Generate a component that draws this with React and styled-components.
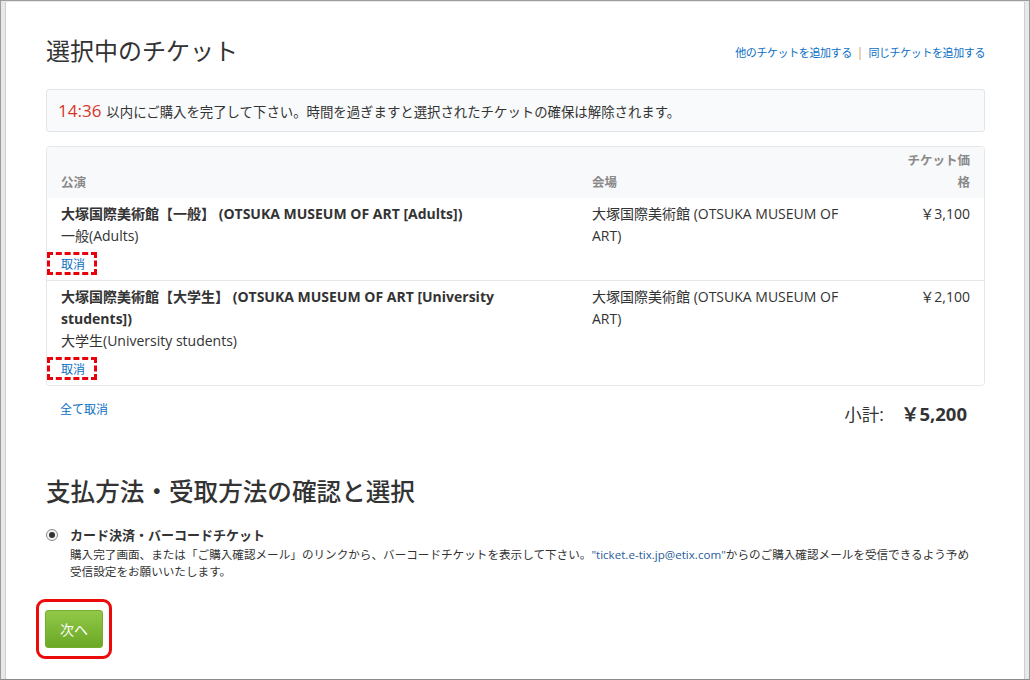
import React from 'react';
import styled, { createGlobalStyle } from 'styled-components';

const GlobalStyle = createGlobalStyle`
  body {
    margin: 0;
    font-family: "Open Sans", "Noto Sans CJK JP", sans-serif;
    color: #333;
  }
`;

const Frame = styled.div`
  width: 1030px;
  height: 680px;
  box-sizing: border-box;
  border: 1px solid #9c9c9c;
  border-bottom-color: #8a8a8a;
  background: #e8e8e8;
  padding: 1px 4px 0 4px;
  display: flex;
`;

const Panel = styled.div`
  flex: 1;
  background: #fff;
  border-left: 1px solid #cfcfcf;
  border-right: 1px solid #cfcfcf;
  padding: 34px 39px 0 40px;
  display: flex;
  flex-direction: column;
`;

const HeadRow = styled.div`
  display: flex;
  align-items: center;
  justify-content: space-between;
`;

const PageTitle = styled.h1`
  margin: 0;
  font-size: ${(p) => (p.$strong ? '24.6px' : '24px')};
  line-height: 30px;
  font-weight: ${(p) => (p.$strong ? 500 : 400)};
  color: #333;
  margin-top: ${(p) => p.$top || 0}px;
`;

const TopLinks = styled.div`
  line-height: 16px;
  margin-top: 2px;
`;

const Link = styled.a`
  color: #0b6fc4;
  text-decoration: none;
  cursor: pointer;
  font-size: ${(p) => (p.$small ? '11px' : '12px')};
  letter-spacing: ${(p) => (p.$small ? '-0.4px' : '0')};
`;

const Sep = styled.span`
  color: #e0955a;
  font-size: 12px;
  margin: 0 5px;
`;

const Alert = styled.div`
  margin-top: 23px;
  height: 43px;
  box-sizing: border-box;
  border: 1px solid #e1e4e8;
  border-radius: 3px;
  background: #f9fafb;
  padding: 0 11px;
  display: flex;
  align-items: center;
  font-size: 13.4px;
`;

const Timer = styled.span`
  color: #d8352a;
  font-size: 17px;
  margin-right: 5px;
`;

const Table = styled.div`
  margin-top: 14px;
  border: 1px solid #e4e6e8;
  border-radius: 4px;
  overflow: hidden;
`;

const Row = styled.div`
  display: grid;
  grid-template-columns: 531px 290px 1fr;
  align-items: ${(p) => (p.$head ? 'end' : 'start')};
  background: ${(p) => (p.$head ? '#f8f9fa' : '#fff')};
  border-top: ${(p) => (p.$head ? 'none' : '1px solid #e6e7e9')};
  &:nth-child(2) {
    border-top: none;
  }
`;

const Cell = styled.div`
  padding: ${(p) => (p.$head ? '3px 14px 4px' : '5px 14px 7px')};
  padding-right: ${(p) => (p.$wide ? 47 : 14)}px;
  text-align: ${(p) => (p.$right ? 'right' : 'left')};
  font-size: ${(p) => (p.$head ? '12.5px' : '14px')};
  font-weight: ${(p) => (p.$head ? 700 : 400)};
  color: ${(p) => (p.$head ? '#8a8a8a' : '#333')};
  line-height: 22px;
`;

const PriceLabel = styled.span`
  display: inline-block;
  max-width: 64px;
`;

const ShowName = styled.div`
  font-weight: 700;
`;

const CancelWrap = styled.div`
  margin-top: 9px;
  line-height: 16px;
`;

const Marked = styled.span`
  position: relative;
  display: inline-block;
  &::after {
    content: '';
    position: absolute;
    left: -14px;
    top: -4px;
    width: 50px;
    height: 23px;
    box-sizing: border-box;
    border: 3px dashed #e8000b;
    pointer-events: none;
  }
`;

const Summary = styled.div`
  display: flex;
  justify-content: space-between;
  align-items: flex-start;
  margin-top: 15px;
  padding: 0 18px 0 14px;
`;

const CancelAll = styled(Link)`
  margin-top: 1px;
  line-height: 16px;
`;

const Subtotal = styled.div`
  display: flex;
  align-items: baseline;
  gap: 17px;
  line-height: 26px;
`;

const SubLabel = styled.span`
  font-size: 17.5px;
  color: #333;
`;

const SubValue = styled.span`
  font-size: 18.5px;
  font-weight: 700;
  color: #333;
`;

const Method = styled.div`
  margin-top: 19px;
  display: flex;
  align-items: flex-start;
`;

const Radio = styled.span`
  width: 12px;
  height: 12px;
  box-sizing: border-box;
  border-radius: 50%;
  border: 1px solid #8a8a8a;
  background: #f4f4f4;
  margin-top: 3px;
  display: flex;
  align-items: center;
  justify-content: center;
  &::after {
    content: '';
    width: 6px;
    height: 6px;
    border-radius: 50%;
    background: #333;
  }
`;

const MethodBody = styled.div`
  margin-left: 12px;
`;

const MethodName = styled.div`
  font-size: 13px;
  font-weight: 700;
  line-height: 18px;
  font-family: "Noto Sans CJK JP", sans-serif;
`;

const MethodDesc = styled.div`
  margin-top: 2px;
  font-size: 11.6px;
  line-height: 16px;
  font-family: "Noto Sans CJK JP", sans-serif;
  & > span {
    display: block;
    white-space: nowrap;
  }
`;

const Mail = styled.span`
  font-family: "Open Sans", sans-serif;
  color: #2a5d9a;
`;

const ButtonWrap = styled.div`
  margin-top: 31px;
  margin-left: -1px;
  align-self: flex-start;
  position: relative;
  &::after {
    content: '';
    position: absolute;
    left: -9px;
    top: -11px;
    right: -9px;
    bottom: -11px;
    border: 3px solid #ec0a0a;
    border-radius: 9px;
    pointer-events: none;
  }
`;

const NextButton = styled.button`
  width: 58px;
  height: 38px;
  border: 1px solid #74ad2c;
  border-radius: 3px;
  background: linear-gradient(#92c848, #6aa826);
  color: #fff;
  font-size: 14px;
  font-family: "Noto Sans CJK JP", sans-serif;
  cursor: pointer;
  padding: 0;
`;

const tickets = [
  {
    name: '大塚国際美術館【一般】 (OTSUKA MUSEUM OF ART [Adults])',
    type: '一般(Adults)',
    price: '￥3,100',
  },
  {
    name: '大塚国際美術館【大学生】 (OTSUKA MUSEUM OF ART [University students])',
    type: '大学生(University students)',
    price: '￥2,100',
  },
];

export default function App() {
  return (
    <>
      <GlobalStyle />
      <Frame>
        <Panel>
          <HeadRow>
            <PageTitle>選択中のチケット</PageTitle>
            <TopLinks>
              <Link $small>他のチケットを追加する</Link>
              <Sep>|</Sep>
              <Link $small>同じチケットを追加する</Link>
            </TopLinks>
          </HeadRow>

          <Alert>
            <Timer>14:36</Timer>
            以内にご購入を完了して下さい。時間を過ぎますと選択されたチケットの確保は解除されます。
          </Alert>

          <Table>
            <Row $head>
              <Cell $head>公演</Cell>
              <Cell $head>会場</Cell>
              <Cell $head $right>
                <PriceLabel>チケット価格</PriceLabel>
              </Cell>
            </Row>
            {tickets.map((t) => (
              <Row key={t.name}>
                <Cell $wide>
                  <ShowName>{t.name}</ShowName>
                  <div>{t.type}</div>
                  <CancelWrap>
                    <Marked>
                      <Link>取消</Link>
                    </Marked>
                  </CancelWrap>
                </Cell>
                <Cell>大塚国際美術館 (OTSUKA MUSEUM OF ART)</Cell>
                <Cell $right>{t.price}</Cell>
              </Row>
            ))}
          </Table>

          <Summary>
            <CancelAll>全て取消</CancelAll>
            <Subtotal>
              <SubLabel>小計:</SubLabel>
              <SubValue>￥5,200</SubValue>
            </Subtotal>
          </Summary>

          <PageTitle $strong $top={50}>支払方法・受取方法の確認と選択</PageTitle>

          <Method>
            <Radio />
            <MethodBody>
              <MethodName>カード決済・バーコードチケット</MethodName>
              <MethodDesc>
                <span>
                  購入完了画面、または「ご購入確認メール」のリンクから、バーコードチケットを表示して下さい。
                  <Mail>"ticket.e-tix.jp@etix.com"</Mail>
                  からのご購入確認メールを受信できるよう予め
                </span>
                <span>受信設定をお願いいたします。</span>
              </MethodDesc>
            </MethodBody>
          </Method>

          <ButtonWrap>
            <NextButton>次へ</NextButton>
          </ButtonWrap>
        </Panel>
      </Frame>
    </>
  );
}
